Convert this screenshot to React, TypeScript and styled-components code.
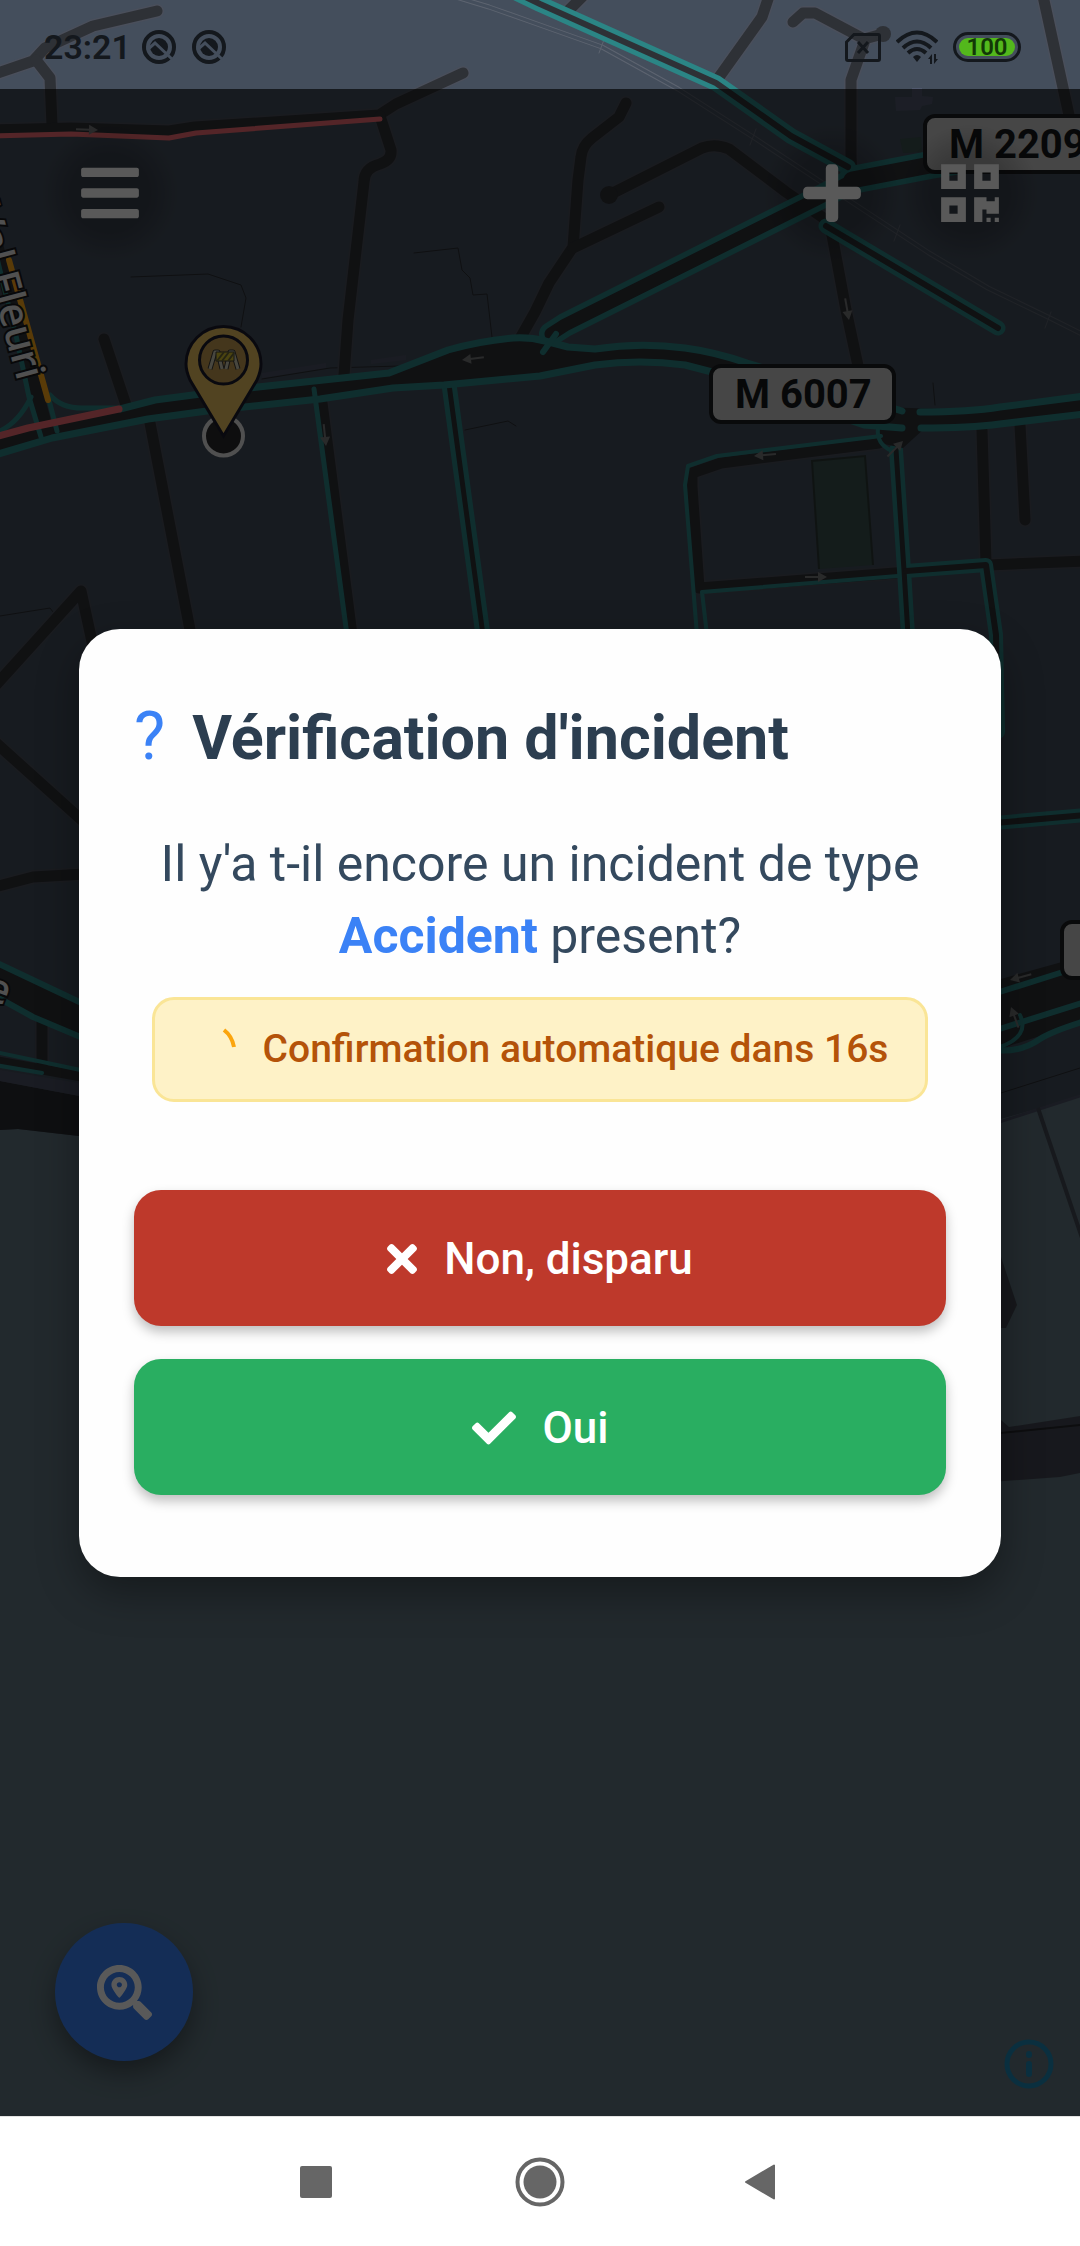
import React from "react";
import styled, { createGlobalStyle } from "styled-components";
import {
  FaBars,
  FaCheck,
  FaPlus,
  FaQrcode,
  FaSearchLocation,
  FaTimes,
} from "react-icons/fa";

const color = {
  land: "#444e5c",
  landEdge: "#4a4f5b",
  road: "#2e3136",
  traffic: "#2b8585",
  jam: "#f06c72",
  slow: "#ffa817",
  water: "#617680",
  park: "#39504d",
  shield: "#c8c8c8",
  ink: "#14181d",
  primary: "#3b82f6",
};

const GlobalStyle = createGlobalStyle`
  *, *::before, *::after { box-sizing: border-box; }
  body {
    margin: 0;
    font-family: Roboto, "Noto Sans", sans-serif;
    background: #fff;
  }
  button { font: inherit; border: 0; padding: 0; cursor: pointer; }
`;

const Screen = styled.div`
  display: flex;
  flex-direction: column;
  min-height: 100vh;
`;

const Stage = styled.main`
  position: relative;
  flex: 1;
  display: grid;
  grid-template-rows: 89px 1fr;
  grid-template-columns: minmax(0, 1fr);
  overflow: hidden;
  background: ${color.water};
`;

const MapCanvas = styled.svg`
  position: absolute;
  inset: 0;
  width: 100%;
  height: 100%;
`;

const StatusBar = styled.header`
  grid-area: 1 / 1;
  z-index: 1;
  display: flex;
  align-items: center;
  justify-content: space-between;
  padding: 5px 59px 0 44px;
  color: ${color.ink};
`;

const StatusGroup = styled.div<{ $gap: number }>`
  display: flex;
  align-items: center;
  gap: ${(p) => p.$gap}px;
`;

const Clock = styled.time`
  font-size: 34px;
  line-height: 40px;
  font-weight: 600;
`;

const Battery = styled.span`
  display: flex;
  width: 68px;
  height: 30px;
  padding: 3px;
  border: 3px solid ${color.ink};
  border-radius: 15px;
`;

const BatteryLevel = styled.span`
  flex: 1;
  display: flex;
  align-items: center;
  justify-content: center;
  border-radius: 9px;
  background: #53b81c;
  color: #123807;
  font-size: 24px;
  line-height: 18px;
  font-weight: 600;
`;

const AppLayer = styled.div`
  grid-area: 2 / 1;
  z-index: 1;
  display: flex;
  flex-direction: column;
  justify-content: space-between;
`;

const Toolbar = styled.div`
  display: flex;
  padding: 35px 41px;
`;

const ToolButton = styled.button<{ $push?: boolean }>`
  display: grid;
  place-items: center;
  width: 138px;
  height: 138px;
  margin-left: ${(p) => (p.$push ? "auto" : "0")};
  border-radius: 50%;
  color: #fff;
  font-size: 66px;
  background: radial-gradient(rgba(0, 0, 0, 0.18) 40%, rgba(0, 0, 0, 0) 70%);
`;

const MapFooter = styled.div`
  display: flex;
  align-items: flex-end;
  justify-content: space-between;
  padding: 0 26px 55px 55px;
`;

const SearchButton = styled.button`
  display: grid;
  place-items: center;
  width: 138px;
  height: 138px;
  border-radius: 50%;
  color: #fff;
  font-size: 55px;
  background: ${color.primary};
  box-shadow: 0 12px 24px rgba(0, 0, 0, 0.35);
`;

const InfoButton = styled.button`
  display: grid;
  background: none;
  margin-bottom: -28px;
`;

const Backdrop = styled.div`
  grid-area: 2 / 1;
  z-index: 2;
  display: flex;
  align-items: center;
  justify-content: center;
  padding: 0 79px;
  background: rgba(0, 0, 0, 0.65);
`;

const Dialog = styled.section`
  flex: 1;
  display: flex;
  flex-direction: column;
  max-width: 1100px;
  padding: 72px 55px 82px;
  border-radius: 41px;
  background: #fefefe;
  box-shadow: 0 16px 40px rgba(0, 0, 0, 0.35);
`;

const DialogHeader = styled.div`
  display: flex;
  align-items: baseline;
  gap: 27px;
  line-height: 72px;
`;

const QuestionMark = styled.span`
  color: ${color.primary};
  font-size: 66px;
`;

const DialogTitle = styled.h1`
  margin: 0;
  color: #2c3e50;
  font-size: 61px;
  font-weight: 700;
`;

const DialogBody = styled.div`
  display: flex;
  flex-direction: column;
  gap: 25px;
  padding: 54px 18px 88px;
`;

const Question = styled.p`
  margin: 0;
  color: #34495e;
  font-size: 50px;
  line-height: 72px;
  text-align: center;
`;

const IncidentType = styled.strong`
  color: ${color.primary};
  font-weight: 700;
`;

const Countdown = styled.div`
  display: flex;
  align-items: center;
  justify-content: center;
  gap: 27px;
  min-height: 105px;
  border: 3px solid #fae596;
  border-radius: 22px;
  background: #fef2c7;
  color: #b45309;
  font-size: 39px;
  line-height: 52px;
  font-weight: 500;
`;

const Actions = styled.div`
  display: flex;
  flex-direction: column;
  gap: 33px;
`;

const ActionButton = styled.button<{ $tone: string }>`
  display: flex;
  align-items: center;
  justify-content: center;
  gap: 27px;
  height: 136px;
  padding-top: 2px;
  border-radius: 27px;
  background: ${(p) => p.$tone};
  box-shadow: 0 6px 12px rgba(0, 0, 0, 0.25);
  color: #fff;
  font-size: 44px;
  line-height: 52px;
  font-weight: 500;
`;

const CrossIcon = styled(FaTimes)`
  width: 30px;
`;

const NavBar = styled.nav`
  display: flex;
  justify-content: center;
  height: 130px;
  border-top: 1px solid #e2e2e2;
  background: #fff;
`;

const NavButton = styled.button`
  display: grid;
  place-items: center;
  width: 224px;
  background: none;
`;

type LineProps = { d: string; w?: number; c?: string };

const Line = ({ d, w = 11, c = color.road }: LineProps) => (
  <path
    d={d}
    fill="none"
    stroke={c}
    strokeWidth={w}
    strokeLinecap="round"
    strokeLinejoin="round"
  />
);

const streets = [
  "M-5 74L33 61L45 48L93 26L157 11",
  "M36 60L50 78L52 125",
  "M-5 130L71 128L169 131L195 127L379 115L396 104L463 73",
  "M380 116L391 150Q392 160 380 164Q364 168 364 182L348 320L344 375",
  "M626 103L619 117L592 138Q582 146 581 157L578 180L573 247L549 283L535 312L518 342",
  "M609 195L702 148Q715 143 729 149L786 192L822 217Q830 222 832 235L846 310L860 375",
  "M659 207L573 248",
  "M793 22L803 13L815 13L864 39L883 34",
  "M864 43L851 80L851 157L852 177",
  "M769 -4L762 17L717 80",
  "M1043 -4L1069 115",
  "M583 -4L567 12",
  "M104 339L126 405",
  "M150 423L191 635",
  "M322 403L352 635",
  "M-5 686L81 591L96 660",
  "M-5 742L85 823",
  "M-5 887L33 877L85 874",
  "M42 1015L42 1065",
  "M879 443L721 463L692 473L692 487L699 588L908 572",
  "M982 430L986 563",
  "M1020 425L1025 520",
  "M988 565L1085 561",
];

/* Each carriageway pair is a traffic-coloured stroke with a dark core. */
const tracedRoads: { d: string; outer: number; inner: number }[] = [
  { d: "M490 -20L540 4L716 83L791 136L848 167", outer: 16, inner: 6 },
  { d: "M852 180L930 165L1085 140", outer: 28, inner: 17 },
  { d: "M846 184L815 200L565 325L551 334", outer: 24, inner: 13 },
  { d: "M826 226L998 328", outer: 15, inner: 6 },
  { d: "M448 377L483 635", outer: 15, inner: 5 },
  { d: "M896 450L904 570L908 635", outer: 14, inner: 5 },
  { d: "M906 571L986 565L996 635L998 732", outer: 14, inner: 6 },
  { d: "M995 823L1085 815", outer: 14, inner: 6 },
];

const hairlines = [
  "M131 277L208 274L241 285L246 298L241 327",
  "M414 253L458 248L462 270L470 278L473 295L487 294L492 337",
  "M465 430L508 421L516 426",
  "M0 616L50 608L53 612",
  "M933 383L935 405",
  "M262 379L330 368L400 366",
  "M1001 1093L1080 1068",
];

const arrows: [number, number, number][] = [
  [98, 130, 2],
  [849, 320, 80],
  [462, 360, 173],
  [326, 446, 84],
  [754, 456, 175],
  [827, 577, 0],
  [903, 441, -45],
  [1010, 980, 165],
  [1011, 1007, -110],
];

const shields: [number, number, number, string][] = [
  [925, 116, 186, "M 2209"],
  [711, 366, 183, "M 6007"],
  [1062, 922, 183, ""],
];

const RAIL =
  "L489 7L540 25L602 47L678 89L753 137L853 203L929 253L988 288L1050 318L1090 338";

const TRESTLES = "M210 369L215 352H218L222 369M226 369L230 352H233L238 369";

function CityMap() {
  return (
    <MapCanvas
      viewBox="0 0 1080 2116"
      preserveAspectRatio="xMidYMin slice"
      role="img"
      aria-label="Carte du trafic"
    >
      <rect width="1080" height="2116" fill={color.water} />
      <path
        d="M0 0H1080V1095L1040 1108L990 1122V1150H100L79 1136L18 1129L0 1130Z"
        fill={color.land}
      />
      <path d="M0 1081L90 1098V1138L79 1136L18 1129L0 1130Z" fill="#292b31" />
      <path d="M0 1070L90 1085V1098L0 1081Z" fill="#4c5164" />
      <path d="M990 1125L1080 1096" stroke="#4c5164" strokeWidth="3" />
      <path d="M1038 1108L1042 1120L1082 1238" fill="none" stroke="#434853" strokeWidth="4" />
      <path d="M990 1225L1001 1257L1017 1305L1006 1328H990Z" fill="#434751" />
      <path d="M990 1414L1001 1420L1009 1427L1080 1416V1473L1060 1477L990 1482Z" fill="#434753" />
      <path d="M990 1434L1080 1425" stroke="#25272b" strokeWidth="2" />
      <path d="M895 97L912 97V88L922 88V96L933 97L932 104L922 106L920 110L896 111Z" fill="#50586d" />
      <path d="M900 139L921 137L922 152L903 153Z" fill={color.park} />
      <path d="M812 461L865 456L873 565L819 569Z" fill={color.park} />
      <path d="M819 569L812 461L865 456L873 565" fill="none" stroke="#2d3834" strokeWidth="2" />
      <path d="M371 360L406 355V360L371 364Z" fill="#4c5164" />
      <path d="M262 373L326 363V368L262 378Z" fill="#4c5164" />

      <Line d={"M456 -3" + RAIL} w={5} c="#5d6470" />
      <Line d={"M456 -3" + RAIL} w={3} c={color.land} />
      {[
        [602, 45],
        [753, 137],
        [897, 233],
        [1048, 320],
      ].map(([x, y]) => (
        <Line key={x} d={`M${x + 3} ${y - 8}L${x - 3} ${y + 8}`} w={1} c="#5d6470" />
      ))}
      {hairlines.map((d) => (
        <Line key={d} d={d} w={1} c="#2b2e33" />
      ))}

      {streets.map((d) => (
        <Line key={d} d={d} w={14} c={color.landEdge} />
      ))}
      {streets.map((d) => (
        <Line key={d} d={d} />
      ))}
      <circle cx="609" cy="195" r="9" fill={color.road} />
      <circle cx="883" cy="34" r="8" fill={color.road} />
      {tracedRoads.map((r) => (
        <Line key={r.d} d={r.d} w={r.outer} c={color.traffic} />
      ))}
      {tracedRoads.map((r) => (
        <Line key={r.d} d={r.d} w={r.inner} />
      ))}

      <path
        d="M0 434L28 428L120 408L155 400L258 387L389 373L448 350L513 338L540 339L595 349L640 345L685 348L747 363L880 407L970 410L1080 397V415L970 428H925L903 448L884 444L876 428L712 372L640 362L595 365L540 376L393 388L148 419L52 438L0 453Z"
        fill={color.road}
      />
      <path d="M0 964L90 1007V1041L33 1017L0 997Z" fill={color.road} />
      <path d="M990 982L1080 957V1022L1040 1036L990 1052Z" fill={color.road} />

      <Line d="M-8 230L47 432" w={14} />
      <Line d="M-5 250L17 340L29 397L41 437" w={5} c={color.traffic} />
      <Line d="M0 431Q19 422 31 397" w={5} c={color.traffic} />
      <Line d="M49 400L57 431" w={5} c={color.traffic} />
      <Line d="M50 395Q62 409 85 408L120 408" w={5} c={color.traffic} />
      <Line
        d="M120 409L155 400L193 395L258 387L389 373L448 350Q480 341 513 338Q530 337 545 341L568 347L595 349Q640 342 685 348Q715 352 747 363L902 411"
        w={7}
        c={color.traffic}
      />
      <Line
        d="M-5 455L52 438L148 419L207 411L320 399L393 388L444 385L540 376L595 365Q640 359 685 365L712 372L864 425L902 428"
        w={7}
        c={color.traffic}
      />
      <Line d="M543 352L556 334" w={6} c={color.traffic} />
      <Line d="M920 412Q970 412 1000 407L1085 396" w={7} c={color.traffic} />
      <Line d="M921 428Q970 428 1000 424L1085 414" w={7} c={color.traffic} />
      <Line d="M878 428Q876 444 892 451" w={4} c={color.traffic} />
      <Line d="M881 436L717 456L688 466L685 485L697 635" w={4} c={color.traffic} />
      <Line d="M898 576L702 592L707 635" w={4} c={color.traffic} />
      <Line d="M314 389L347 635" w={5} c={color.traffic} />
      <Line d="M-5 136L71 134L169 138L196 133L380 119" w={5} c={color.jam} />
      <Line d="M-5 437L28 428L119 409" w={7} c={color.jam} />
      <Line d="M9 260L48 400" w={6} c={color.slow} />

      <Line d="M-5 962L90 1007" w={6} c={color.traffic} />
      <Line d="M-5 996L33 1017L90 1041" w={6} c={color.traffic} />
      <Line d="M-5 1061L90 1078" w={10} />
      <Line d="M-5 1052L90 1072" w={4} c={color.traffic} />
      <Line d="M-5 1065L42 1073" w={4} c={color.traffic} />
      <Line d="M990 995L1063 972L1085 965" w={6} c={color.traffic} />
      <Line d="M990 1032L1085 1002" w={6} c={color.traffic} />
      <Line d="M995 1050Q1020 1053 1040 1039Q1050 1032 1085 1021" w={6} c={color.traffic} />
      <Line d="M1000 1047Q1030 1036 1020 1015" w={4} c={color.traffic} />

      {arrows.map(([x, y, angle]) => (
        <g key={`${x}-${y}`} transform={`translate(${x} ${y}) rotate(${angle})`} fill="#77787a">
          <path d="M0 0L-9 -5V5Z" />
          <path d="M-22 -1H-8V1H-22Z" />
        </g>
      ))}

      {shields.map(([x, y, width, label]) => (
        <g key={x}>
          <rect
            x={x}
            y={y}
            width={width}
            height="56"
            rx="10"
            fill={color.shield}
            stroke="#1b1d20"
            strokeWidth="4"
          />
          {label && (
            <text
              x={x + 24}
              y={y + 42}
              fill="#15181b"
              fontFamily="Roboto, sans-serif"
              fontSize="40"
              fontWeight="700"
            >
              {label}
            </text>
          )}
        </g>
      ))}

      <g
        fill="#e4e4e4"
        stroke="#17191c"
        strokeWidth="4"
        paintOrder="stroke"
        fontFamily="Noto Sans, sans-serif"
        fontSize="41"
        fontWeight="500"
      >
        <text transform="translate(-29 208) rotate(75)">Val Fleuri</text>
        <text transform="translate(-17 998) rotate(20)">e</text>
      </g>

      <circle cx="223.500" cy="436" r="19.500" fill="#2a2a2b" stroke="#e4e4e4" strokeWidth="4" />
      <path
        d="M223.500 436L190 380Q186 371 186 364A37.500 37.500 0 0 1 261 364Q261 371 257 380Z"
        fill="#e7bf5e"
        stroke="#1c1c2c"
        strokeWidth="3"
      />
      <circle cx="223.500" cy="360" r="24" fill="#c39c50" stroke="#1c1c2c" strokeWidth="3" />
      <path d={TRESTLES} fill="none" stroke="#3b3a36" strokeWidth="5" strokeLinejoin="round" />
      <path d={TRESTLES} fill="none" stroke="#cfccb6" strokeWidth="3" strokeLinejoin="round" />
      <path d="M216 352H234V361H216Z" fill="#d8c22f" stroke="#3b3a36" />
      <path
        d="M217 361L224 352M222 361L229 352M228 361L234 353"
        stroke="#6c6738"
        strokeWidth="2"
      />
    </MapCanvas>
  );
}

const NotificationIcon = () => (
  <svg width="34" height="34" viewBox="0 0 34 34" aria-hidden="true">
    <circle cx="17" cy="17" r="15" fill="none" stroke="currentColor" strokeWidth="4" />
    <circle cx="17" cy="17" r="9" fill="currentColor" />
    <path d="M5 20L13 13L30 29" fill="none" stroke="#444e5c" strokeWidth="3" />
  </svg>
);

const NoSimIcon = () => (
  <svg width="36" height="29" viewBox="0 0 36 29" aria-hidden="true">
    <path
      d="M9 1.500H33Q34.500 1.500 34.500 3V26Q34.500 27.500 33 27.500H3Q1.500 27.500 1.500 26V9Z"
      fill="none"
      stroke="currentColor"
      strokeWidth="3"
    />
    <path d="M13 9L23 20M23 9L13 20" stroke="currentColor" strokeWidth="3" />
  </svg>
);

const WifiIcon = () => (
  <svg width="42" height="34" viewBox="0 0 42 34" aria-hidden="true">
    <g fill="none" stroke="currentColor" strokeWidth="4">
      <path d="M1 12Q21 -7 41 12" />
      <path d="M7 18Q21 5 35 18" />
      <path d="M12 23Q21 15 30 23" />
    </g>
    <path d="M17 27Q21 23 25 27L21 32Z" fill="currentColor" />
    <path d="M36 24V34H34V29H32ZM38 34V24H40V29H42Z" fill="currentColor" />
  </svg>
);

export default function App() {
  return (
    <Screen>
      <GlobalStyle />
      <Stage>
        <CityMap />

        <StatusBar>
          <StatusGroup $gap={16}>
            <StatusGroup $gap={11}>
              <Clock>23:21</Clock>
              <NotificationIcon />
            </StatusGroup>
            <NotificationIcon />
          </StatusGroup>
          <StatusGroup $gap={15}>
            <NoSimIcon />
            <WifiIcon />
            <Battery>
              <BatteryLevel>100</BatteryLevel>
            </Battery>
          </StatusGroup>
        </StatusBar>

        <AppLayer>
          <Toolbar>
            <ToolButton type="button" aria-label="Menu">
              <FaBars />
            </ToolButton>
            <ToolButton type="button" aria-label="Ajouter" $push>
              <FaPlus />
            </ToolButton>
            <ToolButton type="button" aria-label="Code QR">
              <FaQrcode />
            </ToolButton>
          </Toolbar>
          <MapFooter>
            <SearchButton type="button" aria-label="Rechercher un lieu">
              <FaSearchLocation />
            </SearchButton>
            <InfoButton type="button" aria-label="Informations">
              <svg width="50" height="50" viewBox="0 0 50 50" stroke="#1f87b4" strokeLinecap="round">
                <circle cx="25" cy="25" r="22" fill="none" strokeWidth="5" />
                <path d="M25 25V35M25 15V16" strokeWidth="6" />
              </svg>
            </InfoButton>
          </MapFooter>
        </AppLayer>

        <Backdrop>
          <Dialog role="dialog" aria-modal="true" aria-labelledby="dialog-title">
            <DialogHeader>
              <QuestionMark aria-hidden="true">?</QuestionMark>
              <DialogTitle id="dialog-title">Vérification d'incident</DialogTitle>
            </DialogHeader>
            <DialogBody>
              <Question>
                Il y'a t-il encore un incident de type <IncidentType>Accident</IncidentType>{" "}
                present?
              </Question>
              <Countdown role="status">
                <svg width="44" height="44" viewBox="0 0 44 44" aria-hidden="true">
                  <path
                    d="M32 3Q40 9 42 20"
                    fill="none"
                    stroke="#fba50d"
                    strokeWidth="4"
                  />
                </svg>
                <span>Confirmation automatique dans 16s</span>
              </Countdown>
            </DialogBody>
            <Actions>
              <ActionButton type="button" $tone="#be392b">
                <CrossIcon />
                Non, disparu
              </ActionButton>
              <ActionButton type="button" $tone="#29ae61">
                <FaCheck />
                Oui
              </ActionButton>
            </Actions>
          </Dialog>
        </Backdrop>
      </Stage>

      <NavBar aria-label="Navigation système">
        <NavButton type="button" aria-label="Applications récentes">
          <svg width="32" height="32" viewBox="0 0 32 32">
            <rect width="32" height="32" rx="2" fill="#666" />
          </svg>
        </NavButton>
        <NavButton type="button" aria-label="Accueil">
          <svg width="50" height="50" viewBox="0 0 50 50">
            <circle cx="25" cy="25" r="22.500" fill="none" stroke="#666" strokeWidth="4" />
            <circle cx="25" cy="25" r="16.500" fill="#666" />
          </svg>
        </NavButton>
        <NavButton type="button" aria-label="Retour">
          <svg width="38" height="36" viewBox="0 0 38 36">
            <path
              d="M1 18L29 1.500V34.500Z"
              fill="#666"
              stroke="#666"
              strokeWidth="2"
              strokeLinejoin="round"
            />
          </svg>
        </NavButton>
      </NavBar>
    </Screen>
  );
}
